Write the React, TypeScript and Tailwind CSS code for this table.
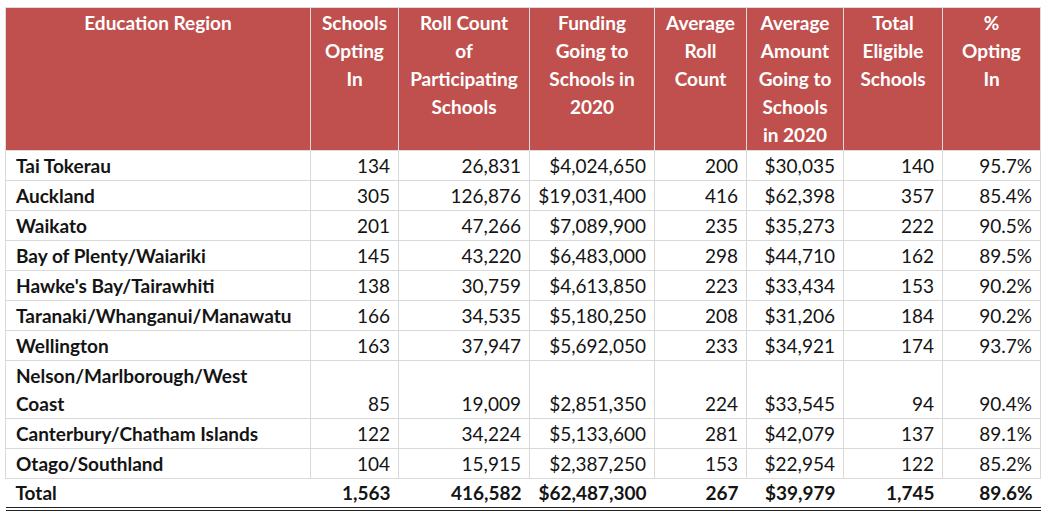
import React from 'react';

type Row = { region: React.ReactNode; opt: string; roll: string; fund: string; avgRoll: string; avgAmt: string; elig: string; pct: string; tall?: boolean };

const rows: Row[] = [
  { region: 'Tai Tokerau', opt: '134', roll: '26,831', fund: '$4,024,650', avgRoll: '200', avgAmt: '$30,035', elig: '140', pct: '95.7%' },
  { region: 'Auckland', opt: '305', roll: '126,876', fund: '$19,031,400', avgRoll: '416', avgAmt: '$62,398', elig: '357', pct: '85.4%' },
  { region: 'Waikato', opt: '201', roll: '47,266', fund: '$7,089,900', avgRoll: '235', avgAmt: '$35,273', elig: '222', pct: '90.5%' },
  { region: 'Bay of Plenty/Waiariki', opt: '145', roll: '43,220', fund: '$6,483,000', avgRoll: '298', avgAmt: '$44,710', elig: '162', pct: '89.5%' },
  { region: "Hawke's Bay/Tairawhiti", opt: '138', roll: '30,759', fund: '$4,613,850', avgRoll: '223', avgAmt: '$33,434', elig: '153', pct: '90.2%' },
  { region: 'Taranaki/Whanganui/Manawatu', opt: '166', roll: '34,535', fund: '$5,180,250', avgRoll: '208', avgAmt: '$31,206', elig: '184', pct: '90.2%' },
  { region: 'Wellington', opt: '163', roll: '37,947', fund: '$5,692,050', avgRoll: '233', avgAmt: '$34,921', elig: '174', pct: '93.7%' },
  { region: <>Nelson/Marlborough/West<br />Coast</>, opt: '85', roll: '19,009', fund: '$2,851,350', avgRoll: '224', avgAmt: '$33,545', elig: '94', pct: '90.4%', tall: true },
  { region: 'Canterbury/Chatham Islands', opt: '122', roll: '34,224', fund: '$5,133,600', avgRoll: '281', avgAmt: '$42,079', elig: '137', pct: '89.1%' },
  { region: 'Otago/Southland', opt: '104', roll: '15,915', fund: '$2,387,250', avgRoll: '153', avgAmt: '$22,954', elig: '122', pct: '85.2%' },
];

const headers: React.ReactNode[] = [
  'Education Region',
  <>Schools<br />Opting<br />In</>,
  <>Roll Count<br />of<br />Participating<br />Schools</>,
  <>Funding<br />Going to<br />Schools in<br />2020</>,
  <>Average<br />Roll<br />Count</>,
  <>Average<br />Amount<br />Going to<br />Schools<br />in 2020</>,
  <>Total<br />Eligible<br />Schools</>,
  <>%<br />Opting<br />In</>,
];

const th = 'border border-[#dcdcdc] bg-[#c0504d] text-white font-bold text-center align-top leading-[28px] px-1 pt-px h-[143px]';
const td = 'border border-[#d9d9d9] text-right align-bottom leading-[28px] pr-[8px] h-[30px] whitespace-nowrap';
const tt = 'text-right align-bottom leading-[28px] pr-[8px] h-[30px] whitespace-nowrap font-bold border-b-4 border-double border-[#222]';

export default function App() {
  return (
    <div className="w-[1050px] h-[518px] bg-white pt-[7px] pl-[5px] text-[#141414] text-[19px]" style={{ fontFamily: 'Lato, "Noto Sans", sans-serif' }}>
      <table className="table-fixed border-collapse w-[1035px]">
        <colgroup>
          <col className="w-[305px]" />
          <col className="w-[88px]" />
          <col className="w-[131px]" />
          <col className="w-[125px]" />
          <col className="w-[92px]" />
          <col className="w-[97px]" />
          <col className="w-[99px]" />
          <col className="w-[98px]" />
        </colgroup>
        <thead>
          <tr>
            {headers.map((h, i) => (
              <th key={i} className={th}>{h}</th>
            ))}
          </tr>
        </thead>
        <tbody>
          {rows.map((r, i) => (
            <tr key={i} className={r.tall ? 'h-[58px]' : ''}>
              <td className="border border-[#d9d9d9] font-bold text-left align-bottom leading-[28px] pl-[10px] h-[30px] whitespace-nowrap">{r.region}</td>
              <td className={td}>{r.opt}</td>
              <td className={td}>{r.roll}</td>
              <td className={td}>{r.fund}</td>
              <td className={td}>{r.avgRoll}</td>
              <td className={td}>{r.avgAmt}</td>
              <td className={td}>{r.elig}</td>
              <td className={td}>{r.pct}</td>
            </tr>
          ))}
          <tr>
            <td className="text-left align-bottom leading-[28px] pl-[10px] h-[30px] font-bold border-b-4 border-double border-[#222]">Total</td>
            <td className={tt}>1,563</td>
            <td className={tt}>416,582</td>
            <td className={tt}>$62,487,300</td>
            <td className={tt}>267</td>
            <td className={tt}>$39,979</td>
            <td className={tt}>1,745</td>
            <td className={tt}>89.6%</td>
          </tr>
        </tbody>
      </table>
    </div>
  );
}
